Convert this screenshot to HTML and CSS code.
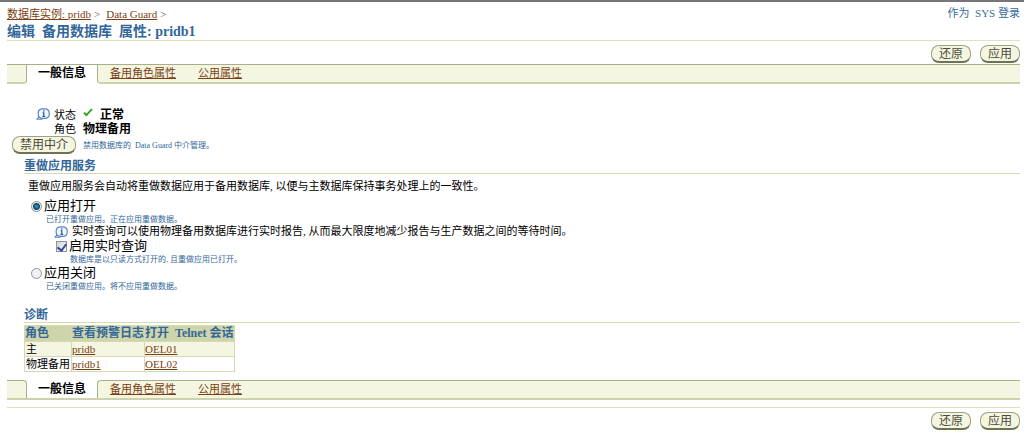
FILE: index.html
```html
<!DOCTYPE html>
<html lang="zh-CN">
<head>
  <meta charset="UTF-8">
  <meta name="viewport" content="width=device-width, initial-scale=1.0">
  <title>编辑备用数据库属性: pridb1</title>
  <link rel="stylesheet" href="styles.css">
</head>
<body>
  <svg width="0" height="0" class="defs" aria-hidden="true">
    <symbol id="info" viewBox="0 0 14 12">
      <path d="M0.5 11.2h6M1 11L3.4 8.6" fill="none" stroke="#5b84c4" stroke-width="1.1"/>
      <rect x="2.2" y="0.8" width="11" height="9.6" rx="4" fill="#f3f7fe" stroke="#5b84c4" stroke-width="1.2"/>
      <path d="M7.8 2.2v1.5M6.6 4.9h1.2v3.3M6.4 8.3h2.8" fill="none" stroke="#2458ac" stroke-width="1.2"/>
    </symbol>
  </svg>

  <header class="header">
    <nav class="crumbs">
      <a href="#">数据库实例: pridb</a><span>&gt;</span><a href="#">Data Guard</a><span>&gt;</span>
    </nav>
    <div class="login">作为&nbsp; SYS 登录</div>
  </header>
  <h1>编辑&nbsp; 备用数据库&nbsp; 属性: pridb1</h1>

  <div class="actions">
    <button class="btn">还原</button>
    <button class="btn">应用</button>
  </div>

  <nav class="tabs">
    <span class="tab-edge"></span>
    <span class="tab-current">一般信息</span>
    <div class="tab-rest">
      <a href="#">备用角色属性</a>
      <a href="#">公用属性</a>
    </div>
  </nav>

  <main>
    <div class="status">
      <svg class="info"><use href="#info"/></svg>
      <span class="label">状态</span>
      <svg class="check" viewBox="0 0 10 9"><path d="M1 4.6l2.4 2.6L9 1" fill="none" stroke="#2a9d1c" stroke-width="1.8"/></svg>
      <b>正常</b>
    </div>
    <div class="status role">
      <span class="label">角色</span>
      <b>物理备用</b>
    </div>
    <div class="broker">
      <button class="btn">禁用中介</button>
      <span class="hint">禁用数据库的&nbsp; Data Guard 中介管理。</span>
    </div>

    <section>
      <h2>重做应用服务</h2>
      <p class="intro">重做应用服务会自动将重做数据应用于备用数据库, 以便与主数据库保持事务处理上的一致性。</p>
      <div class="options">
        <div class="option">
          <input type="radio" name="apply" id="apply-on" checked>
          <label for="apply-on">应用打开</label>
        </div>
        <div class="hint option-hint">已打开重做应用。正在应用重做数据。</div>
        <div class="nested">
          <div class="note">
            <svg class="info"><use href="#info"/></svg>
            <span>实时查询可以使用物理备用数据库进行实时报告, 从而最大限度地减少报告与生产数据之间的等待时间。</span>
          </div>
          <div class="option">
            <input type="checkbox" id="realtime" checked>
            <label for="realtime">启用实时查询</label>
          </div>
          <div class="hint option-hint">数据库是以只读方式打开的, 且重做应用已打开。</div>
        </div>
        <div class="option">
          <input type="radio" name="apply" id="apply-off">
          <label for="apply-off">应用关闭</label>
        </div>
        <div class="hint option-hint">已关闭重做应用。将不应用重做数据。</div>
      </div>
    </section>

    <section class="diag">
      <h2>诊断</h2>
      <table>
        <thead>
          <tr><th>角色</th><th>查看预警日志</th><th>打开&nbsp; Telnet 会话</th></tr>
        </thead>
        <tbody>
          <tr><td>主</td><td><a href="#">pridb</a></td><td><a href="#">OEL01</a></td></tr>
          <tr><td>物理备用</td><td><a href="#">pridb1</a></td><td><a href="#">OEL02</a></td></tr>
        </tbody>
      </table>
    </section>
  </main>

  <nav class="tabs tabs-bottom">
    <span class="tab-edge"></span>
    <span class="tab-current">一般信息</span>
    <div class="tab-rest">
      <a href="#">备用角色属性</a>
      <a href="#">公用属性</a>
    </div>
  </nav>

  <footer class="actions">
    <button class="btn">还原</button>
    <button class="btn">应用</button>
  </footer>
</body>
</html>
```

FILE: styles.css
```css
* {
  box-sizing: border-box;
}
body {
  font-family: "Liberation Serif", "Noto Sans CJK SC", serif;
  font-size: 11px;
  line-height: 14px;
  color: #000;
  background-color: #fff;
  margin: 0;
  padding: 4px 4px 0 7px;
  border-top: 2px solid #77757a;
}
a {
  color: #7a3f14;
}
.defs {
  position: absolute;
}

.header {
  display: flex;
  justify-content: space-between;
  height: 17px;
}
.crumbs {
  padding-top: 1px;
}
.crumbs span {
  color: #6b4a2c;
  margin: 0 6px 0 3px;
}
.login {
  color: #3a6a9c;
}
h1 {
  font-size: 14px;
  line-height: 17px;
  color: #336699;
  margin: 0;
  border-bottom: 1px solid #dfe3bd;
}

.actions {
  display: flex;
  justify-content: flex-end;
  gap: 9px;
  padding: 4px 0 1px;
}
.btn {
  font-family: inherit;
  font-size: 12px;
  line-height: 14px;
  color: #4a4a3a;
  height: 18px;
  padding: 0 7px;
  background-color: #f5f6e2;
  border: 1px solid #9da37c;
  border-bottom: 2px solid #6e7350;
  border-radius: 8px;
}

.tabs {
  display: flex;
  height: 20px;
  line-height: 16px;
  border-top: 1px solid #a9b086;
}
.tab-edge,
.tab-rest {
  background-color: #f5f6e2;
  border-bottom: 2px solid #cdd2ac;
}
.tab-edge {
  width: 20px;
  border-right: 1px solid #a9b086;
  border-bottom-right-radius: 4px;
}
.tab-current {
  font-size: 12px;
  font-weight: bold;
  padding: 0 11px;
}
.tab-rest {
  flex: 1;
  display: flex;
  gap: 22px;
  padding-left: 12px;
  border-left: 1px solid #a9b086;
  border-bottom-left-radius: 4px;
}

main {
  padding-top: 24px;
}
.status {
  display: flex;
  height: 14px;
  padding-left: 29px;
}
.status b {
  font-size: 12px;
}
.info {
  width: 14px;
  height: 12px;
  margin-right: 4px;
}
.label {
  margin-right: 7px;
}
.check {
  width: 10px;
  height: 9px;
  margin-right: 7px;
}
.role {
  padding-left: 47px;
}
.broker {
  display: flex;
  align-items: center;
  gap: 7px;
  padding-left: 5px;
}
.hint {
  font-size: 8px;
  line-height: 11px;
  color: #336699;
}

section {
  margin-left: 17px;
}
h2 {
  font-size: 12px;
  line-height: 14px;
  color: #336699;
  margin: 5px 0 0;
  border-bottom: 1px solid #d5dab5;
}
.intro {
  margin: 5px 4px;
}
.options {
  padding-left: 6px;
}
.option {
  display: flex;
  align-items: center;
  font-size: 13px;
  line-height: 16px;
}
.option input {
  appearance: none;
  width: 11px;
  height: 11px;
  margin: 0 2px 0 1px;
  background-color: #f1f1f1;
  border: 1px solid #8f9499;
}
.option input[type="radio"] {
  border-radius: 50%;
}
.option input[type="radio"]:checked {
  background-image: radial-gradient(circle, #3aa0cf 0, #17415f 3px, #e4edf2 4px);
}
.option input[type="checkbox"]:checked {
  background-image: linear-gradient(135deg, #cfd3da, #fff);
}
.option input[type="checkbox"]:checked::before {
  content: "";
  display: block;
  width: 4px;
  height: 7px;
  margin: 0 auto;
  border: solid #344f9c;
  border-width: 0 2px 2px 0;
  transform: rotate(38deg);
}
.option-hint {
  padding-left: 16px;
}
.nested {
  padding-left: 24px;
}
.nested .option input {
  margin-left: 2px;
}
.note {
  display: flex;
  align-items: center;
  line-height: 13px;
}

.diag h2 {
  margin-top: 16px;
}
table {
  border-collapse: collapse;
  margin-top: 2px;
}
th,
td {
  text-align: left;
  line-height: 14px;
  padding: 0;
  border: 1px solid #d5dab5;
}
td:first-child {
  padding: 0 1px;
}
th {
  font-size: 12px;
  line-height: 15px;
  color: #336699;
  background-color: #cfd5ab;
}
tbody tr:first-child td {
  background-color: #f5f6e2;
}

.tabs-bottom {
  margin-top: 8px;
  border-top: none;
  border-bottom: 2px solid #cdd2ac;
}
.tabs-bottom .tab-edge,
.tabs-bottom .tab-rest {
  border-top: 1px solid #a9b086;
  border-bottom: none;
}
.tabs-bottom .tab-edge {
  border-radius: 0 4px 0 0;
}
.tabs-bottom .tab-rest {
  border-radius: 4px 0 0 0;
}
.tabs-bottom .tab-current {
  padding-top: 1px;
}
footer {
  margin-top: 7px;
  border-top: 1px solid #dfe3bd;
}
```
